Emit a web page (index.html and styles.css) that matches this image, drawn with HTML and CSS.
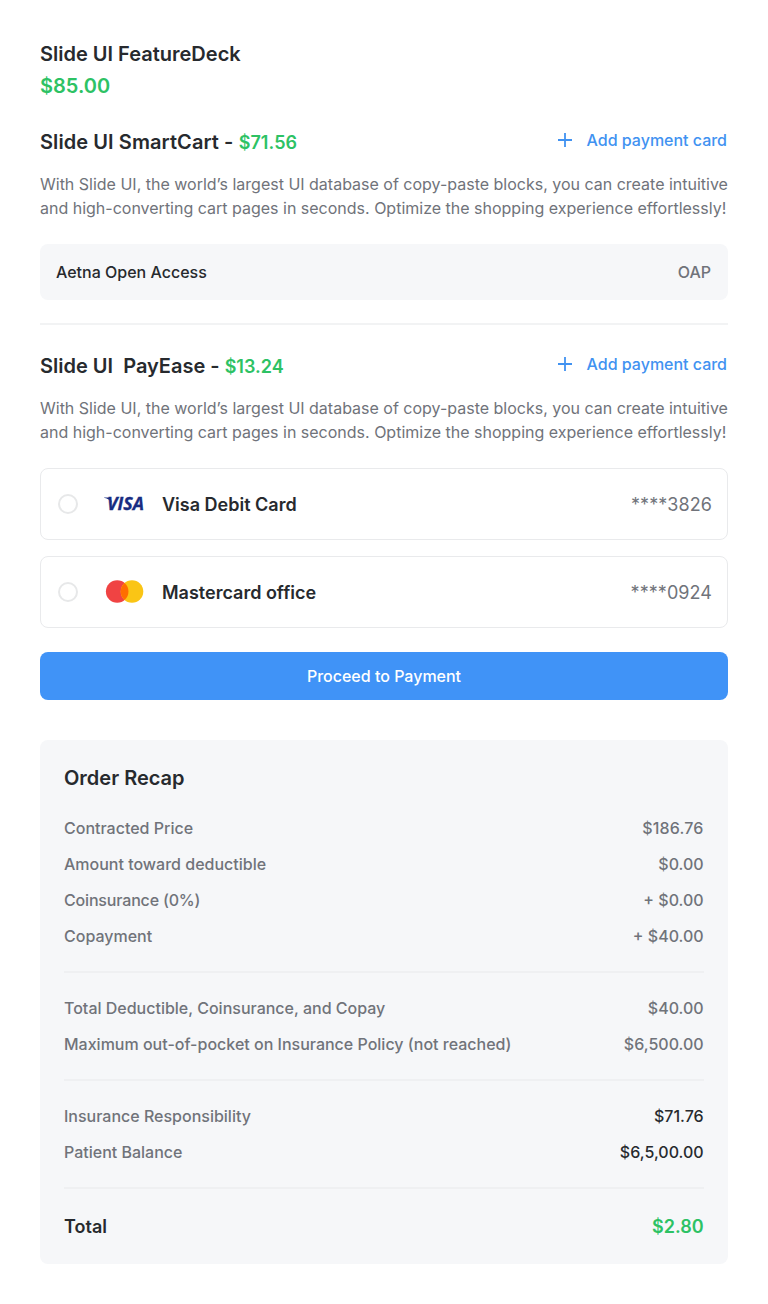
FILE: index.html
```html
<!DOCTYPE html>
<html lang="en">
<head>
<meta charset="utf-8">
<title>Slide UI Checkout</title>
<link rel="stylesheet" href="styles.css">
</head>
<body>
<main class="page">
  <header class="summary">
    <h1 class="title">Slide UI FeatureDeck</h1>
    <p class="title green">$85.00</p>
  </header>

  <section class="plan">
    <div class="plan-head">
      <h2 class="title spaced">Slide UI SmartCart - <span class="amount">$71.56</span></h2>
      <a class="add"><svg class="plus" viewBox="0 0 14 14"><path d="M7 0v14M0 7h14"/></svg>Add payment card</a>
    </div>
    <p class="text">With Slide UI, the world’s largest UI database of copy-paste blocks, you can create intuitive<br>and high-converting cart pages in seconds. Optimize the shopping experience effortlessly!</p>
    <div class="access"><span class="dark">Aetna Open Access</span><span>OAP</span></div>
  </section>

  <hr class="divider section-divider">

  <section class="plan">
    <div class="plan-head">
      <h2 class="title">Slide UI&nbsp; PayEase - <span class="amount">$13.24</span></h2>
      <a class="add"><svg class="plus" viewBox="0 0 14 14"><path d="M7 0v14M0 7h14"/></svg>Add payment card</a>
    </div>
    <p class="text">With Slide UI, the world’s largest UI database of copy-paste blocks, you can create intuitive<br>and high-converting cart pages in seconds. Optimize the shopping experience effortlessly!</p>
    <div class="cards">
      <div class="card">
        <span class="radio"></span>
        <svg class="brand" viewBox="0 0 40 24">
          <path class="visa-flick" d="M0 5.400h6.200l2.200 6C6.800 8.500 3.800 6.500 0 5.800z"/>
          <text class="visa" x="3" y="18.200" textLength="37" lengthAdjust="spacingAndGlyphs">VISA</text>
        </svg>
        <span class="card-name">Visa Debit Card</span>
        <span class="card-number">****3826</span>
      </div>
      <div class="card">
        <span class="radio"></span>
        <svg class="brand" viewBox="0 0 40 24">
          <circle cx="13.200" cy="11.500" r="11.300" fill="#f04343"/>
          <circle cx="28" cy="11.500" r="11.300" fill="#fac515"/>
          <path d="M20.600 3a11.300 11.300 0 0 1 0 17a11.300 11.300 0 0 1 0-17z" fill="#ff6d00"/>
        </svg>
        <span class="card-name">Mastercard office</span>
        <span class="card-number">****0924</span>
      </div>
    </div>
    <button class="pay">Proceed to Payment</button>
  </section>

  <section class="recap">
    <h2 class="title recap-title">Order Recap</h2>
    <div class="rows">
      <div class="row"><span>Contracted Price</span><span class="wide">$186.76</span></div>
      <div class="row"><span>Amount toward deductible</span><span>$0.00</span></div>
      <div class="row"><span class="snug">Coinsurance (0%)</span><span>+ $0.00</span></div>
      <div class="row"><span>Copayment</span><span>+ $40.00</span></div>
    </div>
    <hr class="divider">
    <div class="rows">
      <div class="row"><span>Total Deductible, Coinsurance, and Copay</span><span>$40.00</span></div>
      <div class="row"><span>Maximum out-of-pocket on Insurance Policy (not reached)</span><span>$6,500.00</span></div>
    </div>
    <hr class="divider">
    <div class="rows">
      <div class="row"><span>Insurance Responsibility</span><span class="dark">$71.76</span></div>
      <div class="row"><span>Patient Balance</span><span class="dark">$6,5,00.00</span></div>
    </div>
    <hr class="divider">
    <div class="row total"><span>Total</span><span class="green">$2.80</span></div>
  </section>
</main>
</body>
</html>
```
FILE: styles.css
```css
* { box-sizing: border-box; margin: 0; padding: 0; }
body { background: #fff; color: #70737a; font: 400 16px/24px Inter, "Liberation Sans", sans-serif; }
.page { padding: 38px 40px 40px; }
.title { font-size: 20px; line-height: 32px; font-weight: 600; color: #272a2e; }
.title.green, .green { color: #2dc264; }
.spaced { letter-spacing: .08px; }
.amount { font-size: 18px; line-height: 24px; color: #2dc264; }
.summary { margin-bottom: 24px; }
.plan-head { display: flex; justify-content: space-between; align-items: flex-start; height: 32px; margin-bottom: 14px; }
.add { display: flex; align-items: center; gap: 15px; padding: 2px 1px 0 0; font-weight: 500; letter-spacing: -.01px; color: #4192f1; }
.plus { width: 14px; height: 14px; fill: none; stroke: #4192f1; stroke-width: 1.8; }
.text { white-space: nowrap; letter-spacing: -.003px; margin-bottom: 24px; }
.access { display: flex; justify-content: space-between; align-items: center; height: 56px; padding: 0 17px 0 16px; border-radius: 8px; background: #f6f7f9; font-weight: 500; }
.dark { color: #272a2e; }
.divider { height: 2px; border: 0; background: #eff0f2; margin: 23px 0; }
.section-divider { margin: 23px 0 25px; background: #f2f3f4; }
.cards { display: flex; flex-direction: column; gap: 16px; margin-bottom: 24px; }
.card { display: flex; align-items: center; height: 72px; padding: 0 15px 0 17px; border: 1px solid #e9eaec; border-radius: 8px; font-size: 18px; }
.radio { width: 20px; height: 20px; border: 2px solid #e7e8e9; border-radius: 50%; }
.brand { width: 40px; height: 24px; margin: 0 18px 0 26px; overflow: visible; }
.visa { font: italic 700 17.8px "Open Sans", sans-serif; fill: #182c82; stroke: #182c82; stroke-width: .3; }
.visa-flick { fill: #182c82; }
.card-name { flex: 1; padding-top: 1px; font-weight: 600; color: #272a2e; }
.card-number { padding-top: 1px; letter-spacing: .06px; }
.pay { display: block; width: 100%; height: 48px; border: 0; border-radius: 8px; background: #4093f7; color: #fff; font: 500 16px/24px Inter, sans-serif; }
.recap { margin-top: 40px; padding: 24px; border-radius: 8px; background: #f6f7f9; font-weight: 500; }
.recap-title { line-height: 28px; margin-bottom: 24px; }
.rows { display: flex; flex-direction: column; gap: 12px; }
.row { display: flex; justify-content: space-between; }
.row > :last-child { padding-right: .4px; }
.snug { letter-spacing: -.17px; }
.wide { letter-spacing: .18px; }
.total { padding-top: 1px; font-size: 18px; line-height: 27px; font-weight: 600; color: #272a2e; }
```
